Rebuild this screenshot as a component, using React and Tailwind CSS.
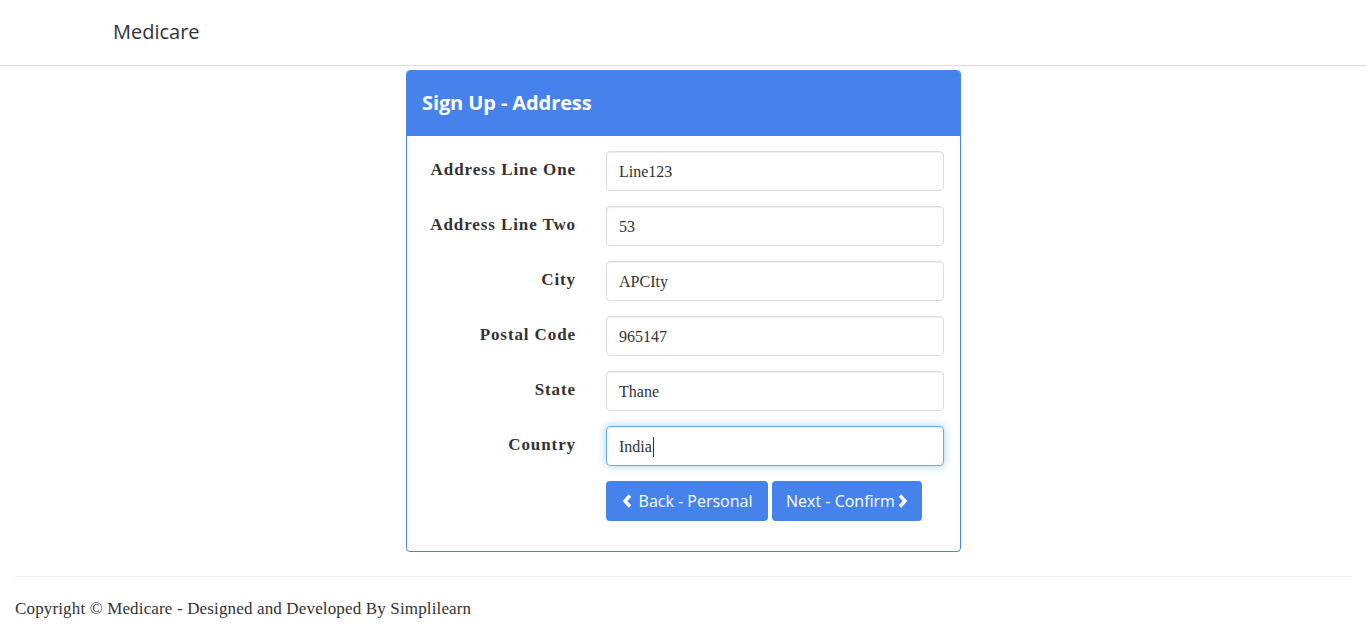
import React from "react";

const serif = { fontFamily: '"Liberation Serif", Georgia, serif' };
const sans = { fontFamily: '"Open Sans", Lato, sans-serif' };

const fields = [
  ["Address Line One", "Line123"],
  ["Address Line Two", "53"],
  ["City", "APCIty"],
  ["Postal Code", "965147"],
  ["State", "Thane"],
  ["Country", "India"],
];

function Chevron({ dir }) {
  return (
    <svg width="11" height="14" viewBox="0 0 11 14" className="shrink-0">
      <polyline
        points={dir === "left" ? "8,1.5 3,7 8,12.5" : "3,1.5 8,7 3,12.5"}
        fill="none"
        stroke="white"
        strokeWidth="3.4"
        strokeLinecap="butt"
        strokeLinejoin="miter"
      />
    </svg>
  );
}

export default function App() {
  return (
    <div className="min-h-[634px] bg-white text-[#333]" style={serif}>
      <nav className="h-[66px] border-b border-[#dddddd] flex items-center">
        <div className="w-[1170px] mx-auto px-[15px] pt-[2px]">
          <span className="text-[20px] text-[#333] leading-none" style={sans}>
            Medicare
          </span>
        </div>
      </nav>

      <div className="w-[1170px] mx-auto px-[15px] pt-[4px]">
        <div className="ml-[293px] w-[555px] border border-[#4582EC] rounded-[4px] overflow-hidden">
          <div className="h-[65px] bg-[#4582EC] flex items-center px-[15px] pb-[2px]">
            <h3 className="text-white text-[20px] font-bold tracking-[-0.1px]" style={sans}>
              Sign Up - Address
            </h3>
          </div>
          <div className="px-[15px] py-[15px]">
            {fields.map(([label, value], i) => (
              <div key={label} className="flex mb-[15px]">
                <label className="w-[154px] text-right pt-[7px] leading-6 text-[17px] font-bold text-[#333] tracking-[0.9px] whitespace-nowrap">
                  {label}
                </label>
                <div className="ml-[30px] w-[338px]">
                  <div
                    className={
                      "h-[40px] rounded-[4px] border px-[12px] flex items-center text-[16px] text-[#333] " +
                      (i === 5
                        ? "border-[#66afe9] shadow-[inset_0_1px_1px_rgba(0,0,0,0.075),0_0_8px_rgba(102,175,233,0.6)]"
                        : "border-[#dddddd] shadow-[inset_0_1px_1px_rgba(0,0,0,0.075)]")
                    }
                  >
                    <span className="pt-[2px]">{value}</span>
                    {i === 5 && <span className="w-px h-[20px] bg-[#333] ml-px mt-[2px]" />}
                  </div>
                </div>
              </div>
            ))}
            <div className="flex mb-[15px]">
              <div className="w-[184px]" />
              <div className="flex gap-[4px]">
                <button
                  className="h-[40px] w-[162px] rounded-[4px] bg-[#4582EC] text-white text-[16px] flex items-center justify-center gap-[6px]"
                  style={sans}
                >
                  <Chevron dir="left" />
                  <span>Back - Personal</span>
                </button>
                <button
                  className="h-[40px] w-[150px] rounded-[4px] bg-[#4582EC] text-white text-[16px] flex items-center justify-center gap-[2px]"
                  style={sans}
                >
                  <span>Next - Confirm</span>
                  <Chevron dir="right" />
                </button>
              </div>
            </div>
          </div>
        </div>
      </div>

      <div className="px-[15px] mt-[24px]">
        <hr className="border-0 border-t border-[#eeeeee]" />
        <p className="mt-[20px] text-[17px] leading-6 tracking-[0.15px]">
          Copyright © Medicare - Designed and Developed By Simplilearn
        </p>
      </div>
    </div>
  );
}
